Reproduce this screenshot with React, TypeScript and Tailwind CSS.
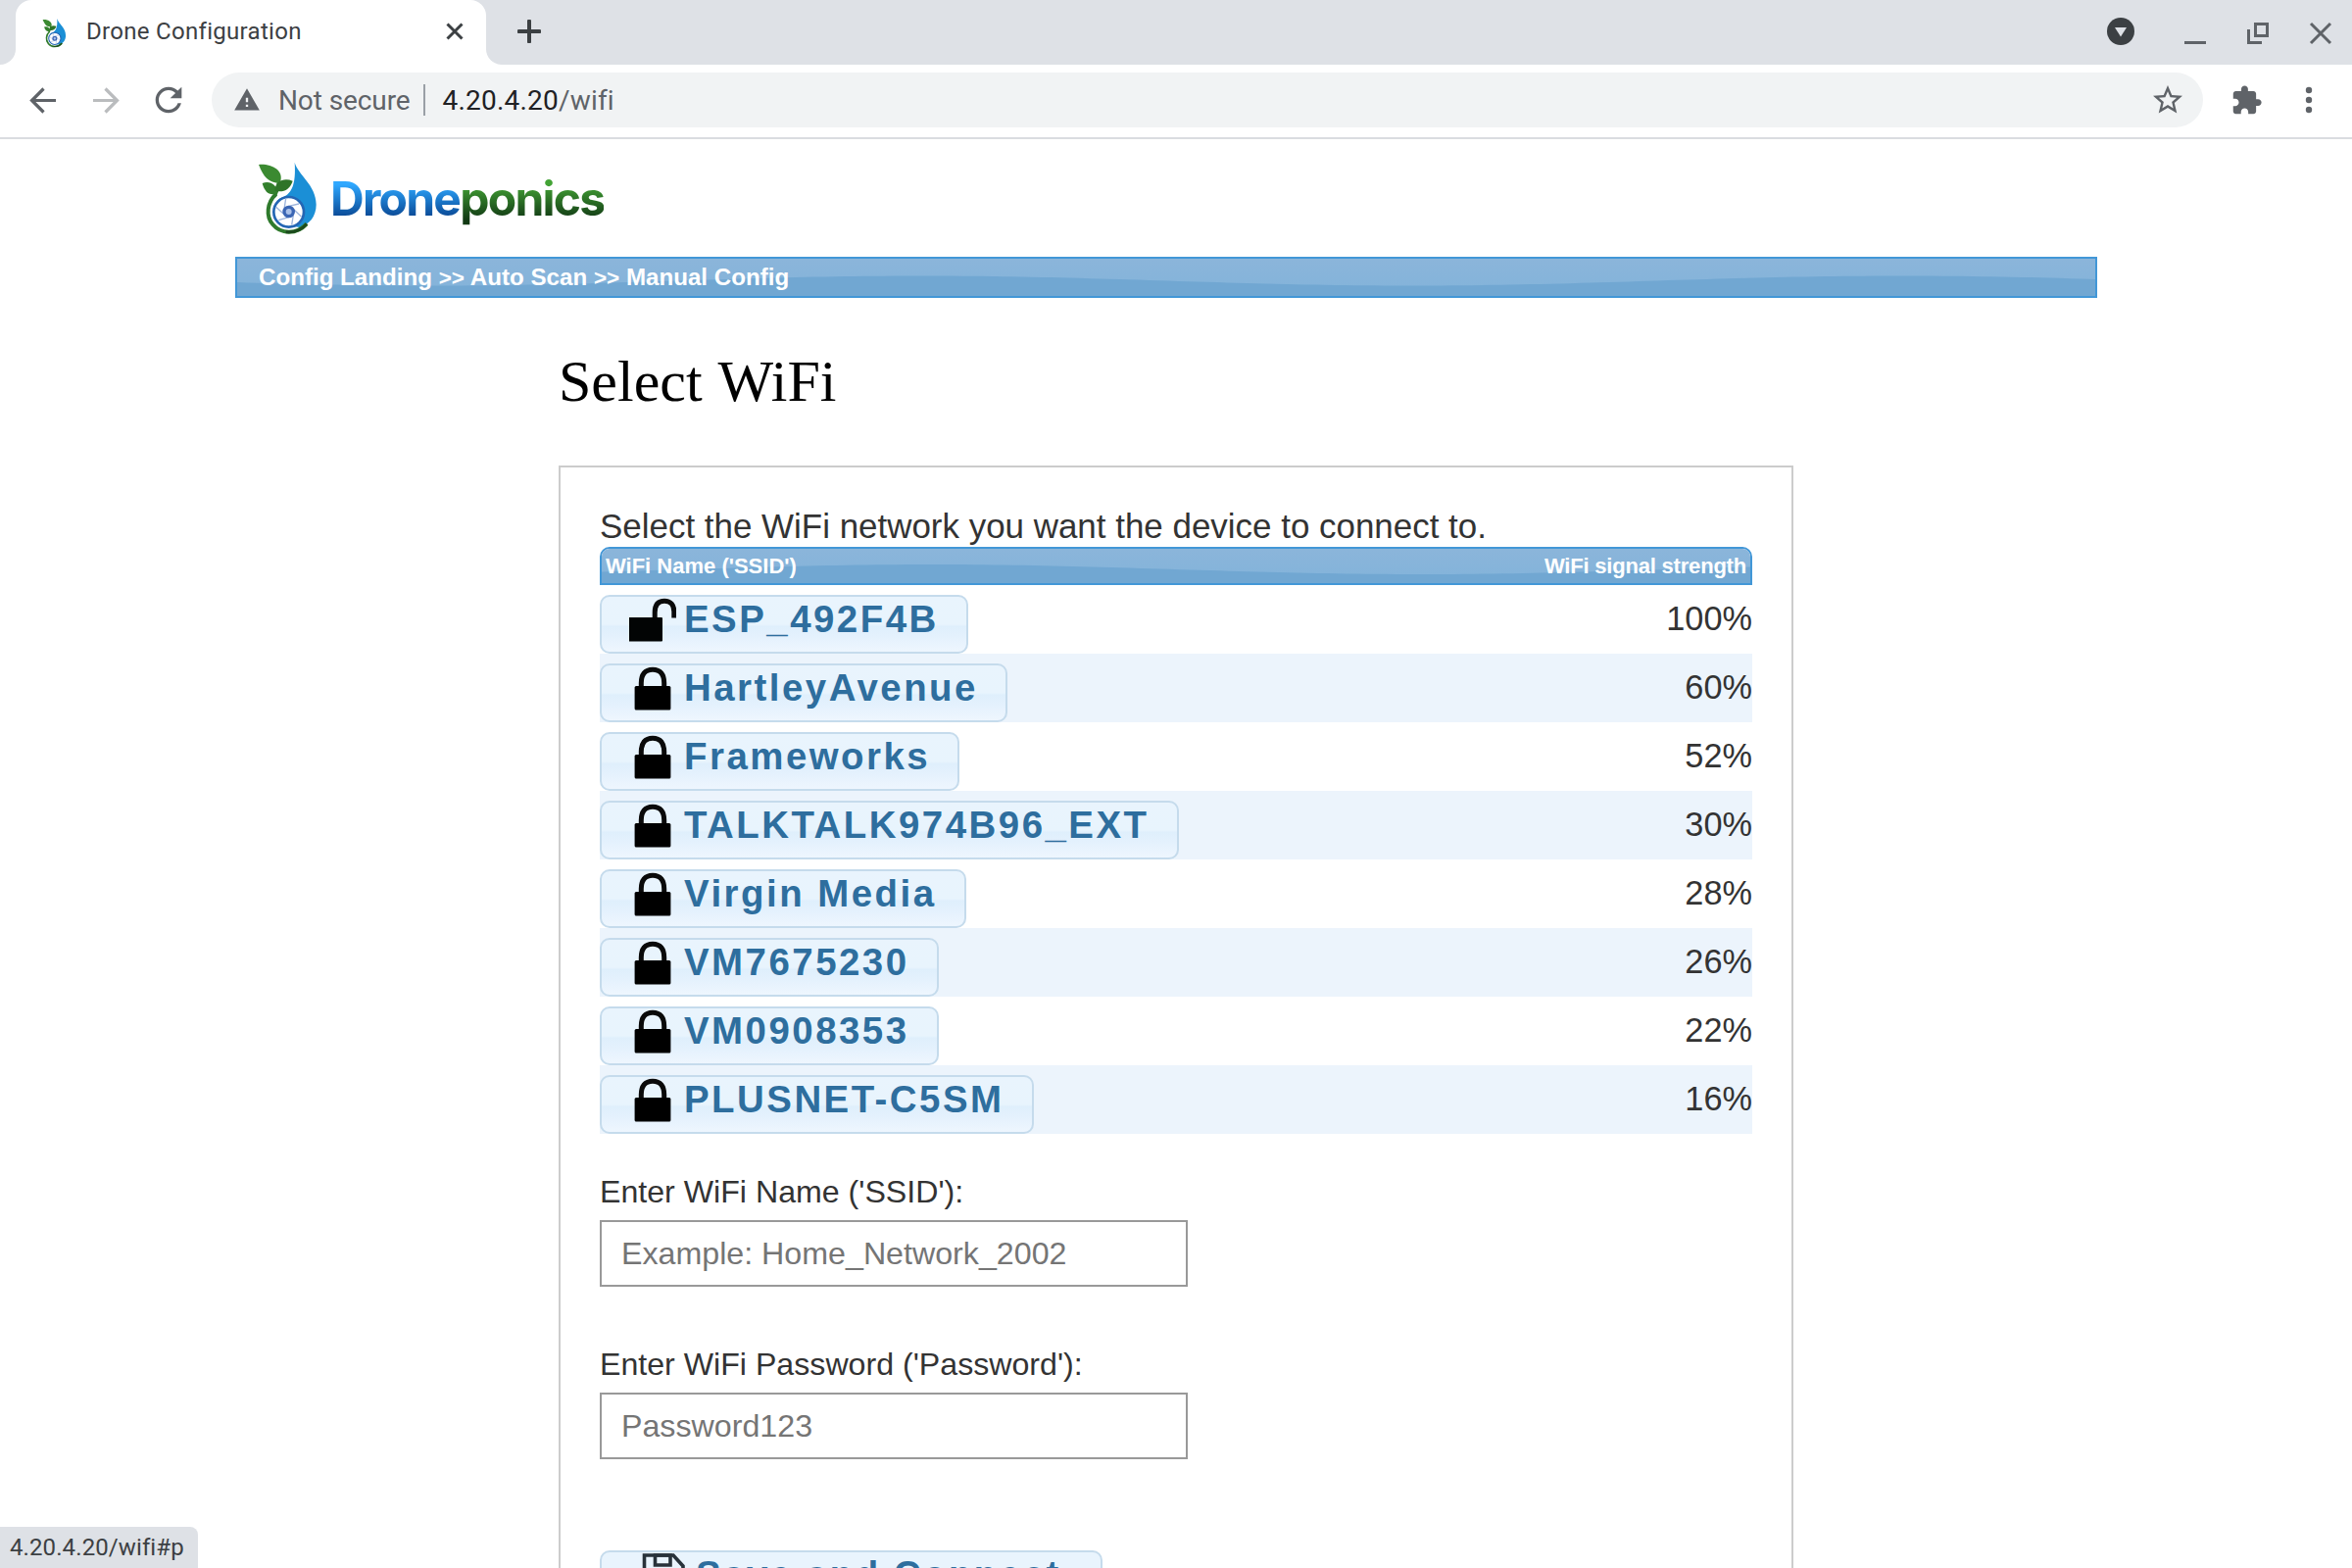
const networks = [
  { name: "ESP_492F4B", strength: "100%", open: true },
  { name: "HartleyAvenue", strength: "60%", open: false },
  { name: "Frameworks", strength: "52%", open: false },
  { name: "TALKTALK974B96_EXT", strength: "30%", open: false },
  { name: "Virgin Media", strength: "28%", open: false },
  { name: "VM7675230", strength: "26%", open: false },
  { name: "VM0908353", strength: "22%", open: false },
  { name: "PLUSNET-C5SM", strength: "16%", open: false },
];

function LogoMark({ className }: { className: string }) {
  return (
    <svg viewBox="0 0 300 255" className={className} aria-hidden="true">
      <path
        d="M137 23C146 60 203 92 203 152C203 190 180 214 152 222L100 214L84 140C92 132 98 130 104 128C126 118 142 92 137 23Z"
        fill="#1b8fd6"
      />
      <path d="M80 120C52 146 48 188 70 213C94 242 142 246 174 211" fill="none" stroke="#2f7a2c" strokeWidth="12" />
      <path d="M110 236C136 238 160 228 174 211" fill="none" stroke="#1d4a1e" strokeWidth="9" />
      <circle cx="119" cy="175" r="46" fill="#fff" stroke="#2466b4" strokeWidth="8" />
      <path d="M119 157L150 150M135 168L158 190M133 184L128 215M119 191L88 200M105 182L80 160M105 166L110 134" fill="none" stroke="#9db4dc" strokeWidth="4" />
      <circle cx="119" cy="174" r="14" fill="#a9c0e8" stroke="#3b66b4" strokeWidth="10" />
      <path d="M88 80L84 108L76 128" fill="none" stroke="#2f7a2c" strokeWidth="9" />
      <path d="M27 30C62 26 108 46 92 86C56 86 42 68 27 30Z" fill="#3b8a31" />
      <path d="M38 87C60 78 84 90 84 118C60 126 46 116 38 87Z" fill="#33802c" />
      <path d="M76 110C78 78 106 70 131 80C122 108 102 116 76 110Z" fill="#2f7428" />
    </svg>
  );
}

/* Glossy bar texture: light top, darker wave across the lower half. */
function WaveBackdrop({ id, width, height, shift }: { id: string; width: number; height: number; shift: number }) {
  const mid = height / 2 + 3.5;
  const points: string[] = [];
  for (let x = 0; x <= width + 10; x += 10) {
    const y = mid - 5 * Math.sin(((x - shift) / 1000) * Math.PI * 2);
    points.push(`${x},${y.toFixed(2)}`);
  }
  return (
    <svg
      className="absolute inset-0 h-full w-full"
      viewBox={`0 0 ${width} ${height}`}
      preserveAspectRatio="none"
      aria-hidden="true"
    >
      <defs>
        <linearGradient id={`${id}-top`} x1="0" y1="0" x2="0" y2="1">
          <stop offset="0" stopColor="#8bb5da" />
          <stop offset="1" stopColor="#82b3da" />
        </linearGradient>
      </defs>
      <rect width={width} height={height} fill={`url(#${id}-top)`} />
      <polygon points={`0,${height} ${points.join(" ")} ${width + 10},${height}`} fill="#71a7d2" />
    </svg>
  );
}

function Lock() {
  return (
    <svg viewBox="0 0 48 48" className="h-12 w-12 shrink-0" aria-hidden="true">
      <path d="M12.3 24V17C12.3 8.500 16 3.200 24 3.200S35.700 8.500 35.700 17V24" fill="none" stroke="#0a0a0a" strokeWidth="5" />
      <rect x="5.600" y="20" width="36.800" height="24.500" rx="1.500" fill="#000" />
    </svg>
  );
}

function OpenLock() {
  return (
    <svg viewBox="0 0 48 48" className="h-12 w-12 shrink-0" aria-hidden="true">
      <path d="M26.200 24V15C26.200 7.500 29.500 3.200 36 3.200S45.800 7.500 45.800 14V20.500" fill="none" stroke="#0a0a0a" strokeWidth="5" />
      <path d="M0 20H33Q34 20 34 21V43.500Q34 44.500 33 44.500H0Z" fill="#020404" />
    </svg>
  );
}

function BrowserChrome() {
  return (
    <header className="font-[Roboto,sans-serif]">
      <div className="flex h-[66px] bg-[#dee1e6]">
        <div className="w-4 bg-white">
          <div className="h-full rounded-br-2xl bg-[#dee1e6]" />
        </div>
        <div className="flex w-[480px] items-center rounded-t-2xl bg-white pl-6 pr-[22px]">
          <LogoMark className="h-[34px] w-10 shrink-0" />
          <span className="ml-[8px] flex-1 text-[24px] leading-8 tracking-[0.3px] text-[#3c4043] -mt-0.5">
            Drone Configuration
          </span>
          <svg viewBox="0 0 20 20" className="h-5 w-5 -mt-0.5" aria-hidden="true">
            <path d="M2.500 2.500l15 15M17.500 2.500l-15 15" stroke="#3c4043" strokeWidth="3" />
          </svg>
        </div>
        <div className="w-4 bg-white">
          <div className="h-full rounded-bl-2xl bg-[#dee1e6]" />
        </div>
        <svg viewBox="0 0 24 24" className="ml-4 mt-5 h-6 w-6" aria-hidden="true">
          <path d="M12 1.500v21M1.500 12h21" stroke="#3c4043" strokeWidth="4" strokeLinecap="round" />
        </svg>
        <div className="ml-auto flex pr-[18px] pt-[18px]">
          <svg viewBox="0 0 28 28" className="h-7 w-7" aria-hidden="true">
            <circle cx="14" cy="14" r="14" fill="#3c4043" />
            <path d="M8 10h12l-6 9.500z" fill="#dee1e6" />
          </svg>
          <svg viewBox="0 0 28 28" className="ml-12 h-7 w-7" aria-hidden="true">
            <path d="M3 25.500h22" stroke="#5f6368" strokeWidth="3" />
          </svg>
          <svg viewBox="0 0 28 28" className="ml-9 h-7 w-7" aria-hidden="true">
            <path d="M4.500 12v13.500H18M11.500 6.500h12v12h-12z" fill="none" stroke="#5f6368" strokeWidth="3" />
          </svg>
          <svg viewBox="0 0 28 28" className="ml-[36px] h-7 w-7" aria-hidden="true">
            <path d="M4 6l20 20M24 6L4 26" stroke="#5f6368" strokeWidth="3" />
          </svg>
        </div>
      </div>
      <div className="flex h-[76px] items-center border-b-2 border-[#dadce0] pb-0.5 pl-6">
        <svg viewBox="0 0 40 40" className="h-10 w-10" aria-hidden="true">
          <path d="M33 20.500H9M20.500 8.500L8.500 20.500L20.500 32.500" fill="none" stroke="#5f6368" strokeWidth="3.200" />
        </svg>
        <svg viewBox="0 0 40 40" className="ml-6 h-10 w-10" aria-hidden="true">
          <path d="M7 20.500H31M19.500 8.500L31.500 20.500L19.500 32.500" fill="none" stroke="#babcbe" strokeWidth="3.200" />
        </svg>
        <svg viewBox="0 0 24 24" className="ml-6 h-10 w-10" fill="#5f6368" aria-hidden="true">
          <path d="M17.650 6.350C16.200 4.900 14.210 4 12 4c-4.420 0-7.990 3.580-7.990 8s3.570 8 7.990 8c3.730 0 6.840-2.550 7.730-6h-2.080c-.820 2.330-3.040 4-5.650 4-3.310 0-6-2.690-6-6s2.690-6 6-6c1.660 0 3.140.690 4.220 1.780L13 11h7V4l-2.350 2.350z" />
        </svg>
        <div className="ml-6 flex h-14 w-[2032px] items-center rounded-full bg-[#f1f3f4] pl-[22px] pr-[18px] text-[28px] leading-8">
          <svg viewBox="0 0 24 24" className="h-7 w-7" fill="#5f6368" aria-hidden="true">
            <path d="M1 21h22L12 2 1 21zm12-3h-2v-2h2v2zm0-4h-2v-4h2v4z" />
          </svg>
          <span className="ml-[18px] mt-0.5 tracking-[-0.1px] text-[#5f6368]">Not secure</span>
          <span className="ml-[13px] h-8 w-0.5 bg-[#9aa0a6]" />
          <span className="ml-[18px] mt-0.5 tracking-[0.2px] text-[#202124]">
            4.20.4.20<span className="text-[#5f6368]">/wifi</span>
          </span>
          <svg viewBox="0 0 24 24" className="ml-auto h-9 w-9" fill="#5f6368" aria-hidden="true">
            <path d="M22 9.240l-7.190-.620L12 2 9.190 8.630 2 9.240l5.460 4.730L5.820 21 12 17.270 18.180 21l-1.630-7.030L22 9.240zM12 15.400l-3.760 2.270 1-4.280-3.320-2.880 4.380-.380L12 6.100l1.710 4.040 4.380.380-3.320 2.880 1 4.280L12 15.400z" />
          </svg>
        </div>
        <svg viewBox="0 0 24 24" className="ml-7 h-[33px] w-[33px]" fill="#5f6368" aria-hidden="true">
          <path d="M20.500 11H19V7c0-1.100-.900-2-2-2h-4V3.500C13 2.120 11.880 1 10.500 1S8 2.120 8 3.500V5H4c-1.100 0-1.990.900-1.990 2v3.800H3.500c1.490 0 2.700 1.210 2.700 2.700s-1.210 2.700-2.700 2.700H2V20c0 1.100.900 2 2 2h3.800v-1.500c0-1.490 1.210-2.700 2.700-2.700 1.490 0 2.700 1.210 2.700 2.700V22H17c1.100 0 2-.900 2-2v-4h1.500c1.380 0 2.500-1.120 2.500-2.500S21.880 11 20.500 11z" />
        </svg>
        <svg viewBox="0 0 8 28" className="ml-[43px] h-7 w-2" fill="#5f6368" aria-hidden="true">
          <circle cx="4" cy="4" r="3.200" />
          <circle cx="4" cy="14" r="3.200" />
          <circle cx="4" cy="24" r="3.200" />
        </svg>
      </div>
    </header>
  );
}

function Field({ label, placeholder }: { label: string; placeholder: string }) {
  return (
    <label className="block">
      <span className="block text-[32.15px] leading-9 text-[#333]">{label}</span>
      <input
        type="text"
        placeholder={placeholder}
        className="mt-[11px] block h-[68px] w-[600px] border-2 border-[#999] bg-white pl-5 pr-4 text-[32.2px] text-[#333] outline-none placeholder:text-[#757575]"
      />
    </label>
  );
}

export default function App() {
  return (
    <div className="relative h-[1600px] w-[2400px] overflow-hidden bg-white font-['Liberation_Sans',Arial,sans-serif]">
      <BrowserChrome />

      <div className="ml-60 w-[1900px]">
        <div className="flex h-[120px] pl-[15px] pt-4">
          <LogoMark className="h-[85px] w-[100px] shrink-0" />
          <div className="-ml-[18px] mt-[15px] font-[Inter,sans-serif] text-[48px] font-bold leading-[60px] tracking-[-1.75px]">
            <span className="inline-block bg-linear-to-b from-[#2fa8ff] from-25% to-[#0b4a96] to-80% bg-clip-text text-transparent">
              Drone
            </span>
            <span className="inline-block bg-linear-to-b from-[#43a335] from-25% to-[#123a14] to-85% bg-clip-text text-transparent">
              ponics
            </span>
          </div>
        </div>
        <nav className="relative h-[42px] overflow-hidden border-2 border-[#4297d7]">
          <WaveBackdrop id="nav" width={1896} height={38} shift={448} />
          <div className="relative pl-[22px] text-[24.15px] font-bold leading-[38px] text-white">
            Config Landing <span className="text-[22.5px]">&gt;&gt;</span> Auto Scan{" "}
            <span className="text-[22.5px]">&gt;&gt;</span> Manual Config
          </div>
        </nav>
      </div>

      <main className="ml-[570px] w-[1260px]">
        <h1 className="mt-[51px] font-['Liberation_Serif','Times_New_Roman',serif] text-[60px] font-normal leading-[68px] text-black [word-spacing:2px]">
          Select WiFi
        </h1>

        <section className="mt-[52px] h-[1300px] border-2 border-[#ccc] p-10 text-[#333]">
          <p className="text-[34.95px] leading-10">Select the WiFi network you want the device to connect to.</p>

          <div className="relative mt-px h-[39px] overflow-hidden rounded-t-[10px] border-2 border-[#4297d7]">
            <WaveBackdrop id="table" width={1172} height={35} shift={86} />
            <div className="relative flex justify-between px-1 text-[22px] font-bold leading-[35px] text-white">
              <span>WiFi Name ('SSID')</span>
              <span className="tracking-[-0.2px]">WiFi signal strength</span>
            </div>
          </div>

          <ul>
            {networks.map((network) => (
              <li key={network.name} className="flex h-[70px] items-end justify-between even:bg-[#ecf4fc]">
                <button
                  type="button"
                  className="flex h-[60px] items-start rounded-[10px] border-2 border-[#c5dbec] bg-[linear-gradient(to_bottom,#e9f4fd_0%,#e8f4fd_50%,#dfeffc_54%,#e4f1fd_72%,#eef6fe_100%)] pl-7 pr-[28px] pt-px"
                >
                  {network.open ? <OpenLock /> : <Lock />}
                  <span className="ml-[8px] text-[38.4px] font-bold leading-[43px] tracking-[2.5px] text-[#2e6e9e]">
                    {network.name}
                  </span>
                </button>
                <span className="mb-4 text-[34.3px] leading-10">{network.strength}</span>
              </li>
            ))}
          </ul>

          <div className="mt-[41px] flex flex-col gap-[61px]">
            <Field label="Enter WiFi Name ('SSID'):" placeholder="Example: Home_Network_2002" />
            <Field label="Enter WiFi Password ('Password'):" placeholder="Password123" />
          </div>

          <button
            type="button"
            className="mt-[93px] flex h-[60px] w-[513px] items-start rounded-[10px] border-2 border-[#c5dbec] bg-[#e9f4fd] pl-[39px] pt-px"
          >
            <svg viewBox="0 0 48 48" className="h-12 w-12 shrink-0" fill="none" stroke="#28323a" strokeWidth="3.6" aria-hidden="true">
              <path d="M4.500 2H34L44 13V45H4.500Z" />
              <path d="M15.500 2H31V12H15.500Z" />
            </svg>
            <span className="ml-[9px] text-[38.4px] font-bold leading-[43px] tracking-[2.5px] text-[#2e6e9e]">
              Save and Connect
            </span>
          </button>
        </section>
      </main>

      <div className="absolute bottom-0 left-0 h-[42px] w-[202px] rounded-tr-lg bg-[#dee1e6] pl-2.5 font-[Roboto,sans-serif] text-[24px] leading-[42px] tracking-[0.1px] text-[#3c4043]">
        4.20.4.20/wifi#p
      </div>
    </div>
  );
}
